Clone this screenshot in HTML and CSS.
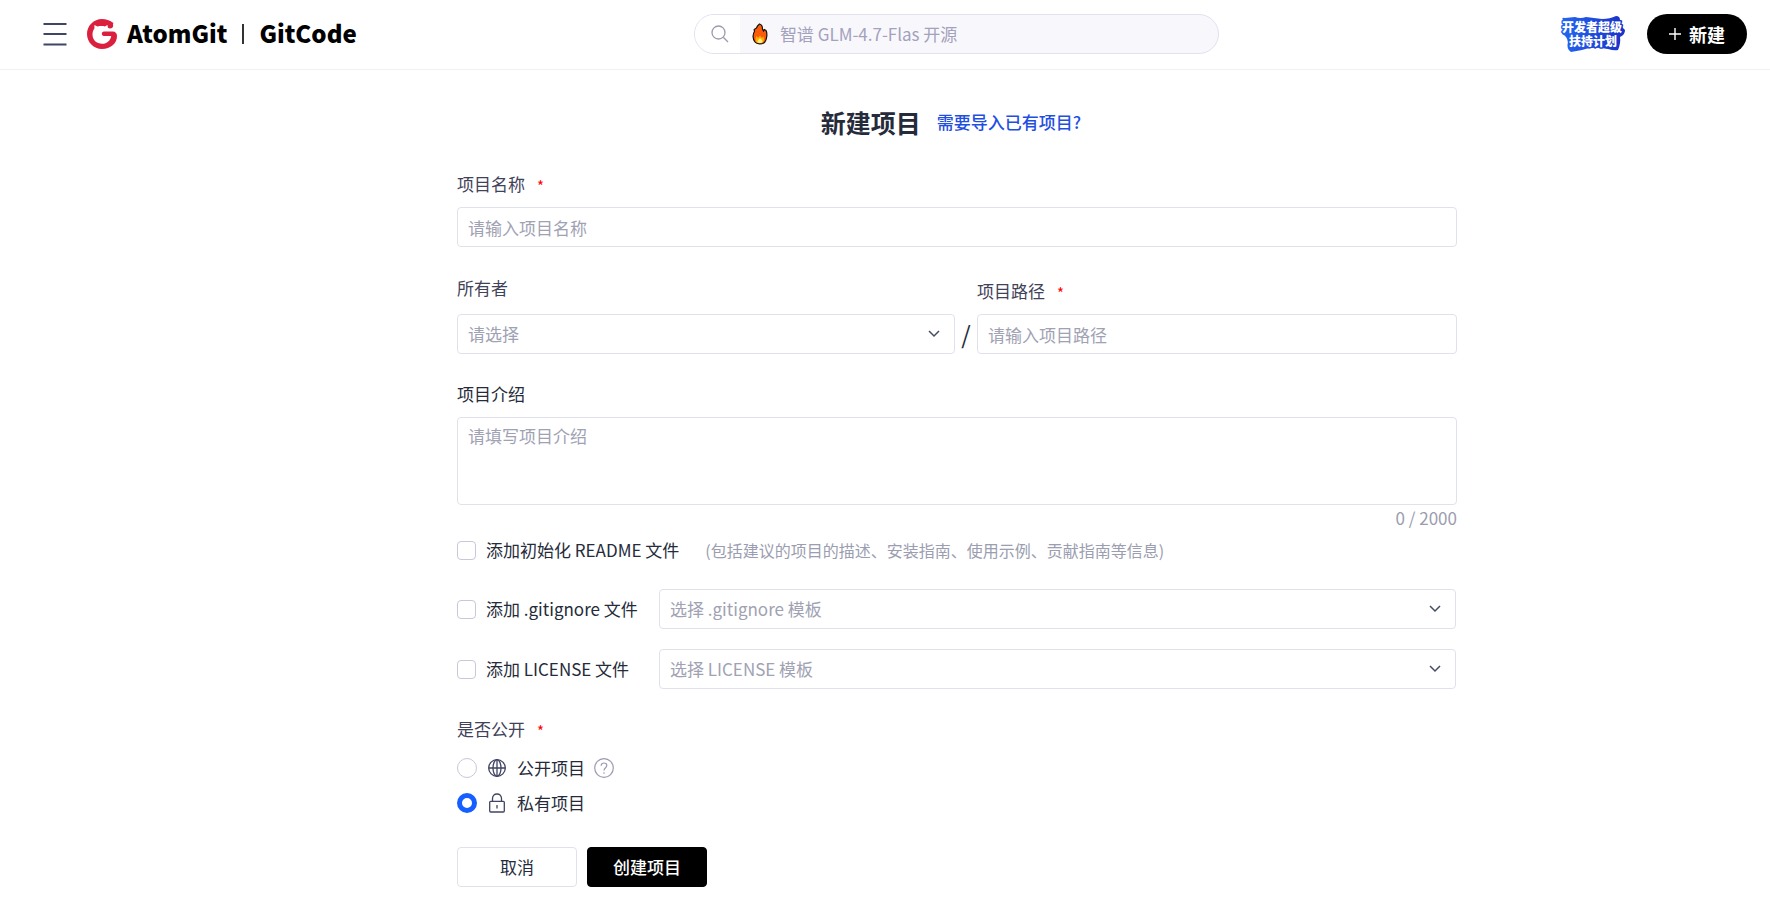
FILE: index.html
```html
<!DOCTYPE html>
<html lang="zh-CN">
<head>
<meta charset="utf-8">
<meta name="viewport" content="width=device-width, initial-scale=1">
<title>新建项目</title>
<link rel="stylesheet" href="styles.css">
</head>
<body>
<header class="header">
  <div class="brand">
    <button class="menu-btn" type="button" aria-label="菜单">
      <svg width="24" height="24" viewBox="0 0 24 24"><path d="M0.5 2H23.5M0.5 12H23.5M0.5 22.5H23.5" stroke="#3f4562" stroke-width="1.8"/></svg>
    </button>
    <a class="logo" href="#">
      <svg class="logo-mark" width="30" height="30" viewBox="0 0 30 30"><path d="M15 0C6.700 0 0 6.700 0 15S6.700 30 15 30C23.500 30 30 24.500 30 17C30 14.200 28.200 12.600 25.800 12.600H17C15.500 12.600 14.800 13.600 14.800 14.800S15.500 17 17 17H24.200C23.600 21.500 20 24.800 15.200 24.800C9.500 24.800 5.500 21 5.500 15.500C5.500 13 6.300 11.200 7.400 9.600V6L10.500 7.600C13 7 16 7 17.800 7.400L20.500 6L20.800 8.400C21.800 9.600 23.500 9.800 24.900 9C26.300 8 26.400 6.400 25.900 5.400C26.600 4.700 26.300 4 25.700 3.600C22.800 1.200 19 0 15 0Z" fill="#da203e"/></svg>
      <span class="logo-text">AtomGit</span>
      <span class="logo-divider"></span>
      <span class="logo-text">GitCode</span>
    </a>
  </div>
  <form class="search" role="search">
    <button class="search-btn" type="button" aria-label="搜索">
      <svg width="18" height="18" viewBox="0 0 18 18" fill="none" stroke="#9b9cab" stroke-width="1.3"><circle cx="7.500" cy="7.500" r="6.500"/><path d="M12.300 12.300L17 17"/></svg>
    </button>
    <svg class="fire" width="16" height="22" viewBox="0 0 16 22"><path d="M7.500 1C9.500 1.500 10.500 3.500 10.500 6L11.500 8L12.300 6.500L14 7.500C15.500 10 15 17 12.500 19.500C10 21.500 5 21.500 3 19C0.500 16 0.500 11 2.500 8.500L2.200 6.500L4.500 5C5 3 6 2 7.500 1Z" fill="#fb5b0b" stroke="#111" stroke-width="1.2"/><path d="M4 18.500C3 16.500 3.800 14 4.800 13L6 15L8 12.500L10 15L11.300 13.500C12.300 15.500 12 18 11 19C9 20.800 5.500 20.500 4 18.500Z" fill="#ffb000"/><path d="M5.500 19C5.500 17.500 7 15.500 8 15.500S10.500 17.500 10.500 19C9 20.200 7 20.200 5.500 19Z" fill="#fff27a"/></svg>
    <input class="search-input" type="text" aria-label="搜索" placeholder="智谱 GLM-4.7-Flas 开源">
  </form>
  <div class="actions">
    <a class="promo" href="#" aria-label="开发者超级扶持计划">
      <svg width="66" height="38" viewBox="0 0 66 38">
        <defs><linearGradient id="promo-fill" gradientUnits="userSpaceOnUse" x1="0" x2="66" y1="0" y2="0"><stop offset="0" stop-color="#2468f2"/><stop offset="1" stop-color="#1a30c6"/></linearGradient></defs>
        <path d="M3 5Q1 2 5 3L15 2Q20 4 26 2L42 4Q50 4 56 1Q60 1 60 5Q61 12 65 15Q65 20 60 22Q61 28 58 35Q54 36 48 34Q32 31 22 35L11 37Q6 34 8 27Q7 21 2 19Q4 12 3 5Z" fill="url(#promo-fill)"/>
        <text class="promo-text" x="32" y="17" text-anchor="middle">开发者超级</text>
        <text class="promo-text" x="33" y="31" text-anchor="middle">扶持计划</text>
      </svg>
    </a>
    <button class="create-btn" type="button">
      <svg width="12" height="12" viewBox="0 0 12 12"><path d="M6 0V12M0 6H12" stroke="#fff" stroke-width="1.400"/></svg>
      新建
    </button>
  </div>
</header>

<main class="main">
  <form class="form">
    <div class="title-row">
      <h1 class="title">新建项目</h1>
      <a class="import-link" href="#">需要导入已有项目?</a>
    </div>

    <div class="field">
      <label class="label" for="name">项目名称<span class="required">*</span></label>
      <input class="control" id="name" type="text" placeholder="请输入项目名称">
    </div>

    <div class="path-row">
      <div class="field owner">
        <label class="label" for="owner">所有者</label>
        <span class="select-box">
          <select class="control" id="owner"><option>请选择</option></select>
          <svg class="chevron" width="12" height="8" viewBox="0 0 12 8"><path d="M1 1L6 6L11 1"/></svg>
        </span>
      </div>
      <span class="slash">/</span>
      <div class="field path">
        <label class="label" for="path">项目路径<span class="required">*</span></label>
        <input class="control" id="path" type="text" placeholder="请输入项目路径">
      </div>
    </div>

    <div class="field intro">
      <label class="label label-dark" for="intro">项目介绍</label>
      <textarea class="control textarea" id="intro" placeholder="请填写项目介绍"></textarea>
      <span class="counter">0 / 2000</span>
    </div>

    <div class="options">
      <div class="option option-readme">
        <label class="check-label"><input class="checkbox" type="checkbox">添加初始化 README 文件</label>
        <span class="hint">(包括建议的项目的描述、安装指南、使用示例、贡献指南等信息)</span>
      </div>
      <div class="option">
        <label class="check-label check-fixed"><input class="checkbox" type="checkbox">添加 .gitignore 文件</label>
        <span class="select-box">
          <select class="control" aria-label="选择 .gitignore 模板"><option>选择 .gitignore 模板</option></select>
          <svg class="chevron" width="12" height="8" viewBox="0 0 12 8"><path d="M1 1L6 6L11 1"/></svg>
        </span>
      </div>
      <div class="option">
        <label class="check-label check-fixed"><input class="checkbox" type="checkbox">添加 LICENSE 文件</label>
        <span class="select-box">
          <select class="control" aria-label="选择 LICENSE 模板"><option>选择 LICENSE 模板</option></select>
          <svg class="chevron" width="12" height="8" viewBox="0 0 12 8"><path d="M1 1L6 6L11 1"/></svg>
        </span>
      </div>
    </div>

    <fieldset class="visibility">
      <legend class="label">是否公开<span class="required">*</span></legend>
      <div class="radio-row">
        <label class="radio-label"><input class="radio" type="radio" name="visibility">
          <svg width="20" height="20" viewBox="0 0 20 20" fill="none" stroke="#3f4562" stroke-width="1.300"><circle cx="10" cy="10" r="8.300"/><ellipse cx="10" cy="10" rx="4" ry="8.300"/><path d="M1.700 10H18.300M10 1.700V18.300"/></svg>
          公开项目</label>
        <button class="help" type="button" aria-label="帮助">
          <svg width="20" height="20" viewBox="0 0 20 20" fill="none" stroke="#9a98b5" stroke-width="1.200"><circle cx="10" cy="10" r="9.300"/><path d="M7.200 7.800C7.200 6 8.300 5 10 5S12.800 6 12.800 7.600C12.800 9.600 10 9.900 10 12.500M10 14.200V15.700"/></svg>
        </button>
      </div>
      <div class="radio-row">
        <label class="radio-label"><input class="radio" type="radio" name="visibility" checked>
          <svg width="20" height="20" viewBox="0 0 20 20" fill="none" stroke="#3f4562" stroke-width="1.300"><rect x="2.700" y="8.300" width="14.600" height="10.700" rx="1"/><path d="M5.500 8.300V5.500C5.500 2.900 7.400 1 10 1S14.500 2.900 14.500 5.500V8.300M10 12V15.500"/></svg>
          私有项目</label>
      </div>
    </fieldset>

    <div class="buttons">
      <button class="btn" type="button">取消</button>
      <button class="btn btn-primary" type="submit">创建项目</button>
    </div>
  </form>
</main>
</body>
</html>
```
FILE: styles.css
```css
* { box-sizing: border-box; }

body {
  margin: 0;
  background: #fff;
  color: #252b3a;
  font: 17px/24px "Noto Sans CJK SC", sans-serif;
}

button, input, select, textarea { font: inherit; color: inherit; }
button { padding: 0; border: 0; background: none; cursor: pointer; }
a { text-decoration: none; }
svg { display: block; flex: none; }

.header {
  display: flex;
  align-items: center;
  justify-content: space-between;
  gap: 24px;
  height: 70px;
  padding: 0 23px 2px 43px;
  border-bottom: 1px solid #f0f0f3;
}

.brand { display: flex; align-items: center; gap: 20px; }
.logo { display: flex; align-items: center; gap: 10px; color: #000; }
.logo-text {
  padding-bottom: 2px;
  font-size: 24px;
  font-weight: 900;
  line-height: 32px;
}
.logo-divider { width: 2px; height: 20px; margin: 0 5px; background: #333; }

.search {
  display: flex;
  align-items: center;
  flex: 0 1 525px;
  height: 40px;
  margin-right: 4px;
  border: 1px solid #e2e1ee;
  border-radius: 20px;
  background: #f8f8fc;
  overflow: hidden;
}
.search-btn {
  display: flex;
  align-items: center;
  align-self: stretch;
  width: 45px;
  padding-left: 16px;
  background: #fff;
}
.fire { margin: 0 12px; }
.search-input { flex: 1; min-width: 0; padding: 0; border: 0; outline: 0; background: none; }
.search-input::placeholder { color: #a3a1bc; opacity: 1; }

.actions { display: flex; align-items: center; gap: 21px; }
.promo-text {
  font-size: 12px;
  font-weight: 900;
  fill: #fff;
  stroke: url(#promo-fill);
  stroke-width: 3px;
  stroke-linejoin: round;
  paint-order: stroke;
}
.create-btn {
  display: flex;
  align-items: center;
  justify-content: center;
  gap: 8px;
  width: 100px;
  height: 40px;
  border-radius: 20px;
  background: #000;
  color: #fff;
  font-size: 18px;
  font-weight: 700;
}

.main { padding: 34px 0 20px 144px; }
.form { display: flex; flex-direction: column; width: 100%; max-width: 1000px; margin: 0 auto; }

.title-row { display: flex; align-items: center; justify-content: center; gap: 16px; padding-right: 12px; }
.title { margin: 0; font-size: 25px; line-height: 36px; font-weight: 700; }
.import-link { color: #1f4fe0; font-weight: 500; }

.field { display: flex; flex-direction: column; gap: 11px; }
.title-row + .field { margin-top: 32px; }
.label { display: flex; align-items: center; gap: 12px; padding: 0; color: #3f4259; }
.label-dark { color: #252b3a; }
.required { padding-top: 3px; color: #f00; font-size: 15px; line-height: 16px; }

.control {
  width: 100%;
  height: 40px;
  padding: 0 10px;
  border: 1px solid #e1e1ec;
  border-radius: 4px;
  background: #fff;
  outline: 0;
}
.control::placeholder { color: #a0a2b3; opacity: 1; }
.select-box { display: grid; flex: 1; align-items: center; }
.select-box > * { grid-area: 1 / 1; }
select.control { appearance: none; color: #a0a2b3; }
.chevron { justify-self: end; margin-right: 15px; fill: none; stroke: #464c63; stroke-width: 1.5px; pointer-events: none; }

.path-row { display: flex; align-items: flex-end; margin-top: 29px; }
.owner { flex: 498; gap: 14px; }
.path { flex: 480; }
.slash { width: 22px; font-size: 24px; line-height: 40px; text-align: center; }

.intro { margin-top: 28px; }
.textarea { height: 88px; padding: 6px 10px; resize: none; }
.counter { margin-top: -10px; color: #9b9db0; text-align: right; }

.options { display: flex; flex-direction: column; gap: 20px; margin-top: 8px; padding-right: 1px; }
.option { display: flex; align-items: center; min-height: 24px; }
.option-readme { gap: 26px; margin-bottom: 7px; }
.check-label, .radio-label { display: flex; align-items: center; gap: 10px; }
.check-fixed { width: 202px; }
.hint { color: #9b9db0; font-size: 16px; }
.checkbox, .radio {
  appearance: none;
  width: 19px;
  height: 19px;
  margin: 0;
  border: 1px solid #c9c7da;
  border-radius: 4px;
  background: #fff;
}
.radio { width: 20px; height: 20px; border-radius: 50%; }
.radio:checked { border: 5px solid #155eff; }

.visibility { display: flex; flex-direction: column; gap: 11px; min-width: 0; margin: 28px 0 0; padding: 0; border: 0; }
.visibility .label { margin-bottom: 15px; }
.radio-row { display: flex; align-items: center; gap: 9px; }

.buttons { display: flex; gap: 10px; margin-top: 32px; }
.btn { width: 120px; height: 40px; border: 1px solid #e1e1ec; border-radius: 4px; background: #fff; }
.btn-primary { border-color: #000; background: #000; color: #fff; font-weight: 500; }
```
